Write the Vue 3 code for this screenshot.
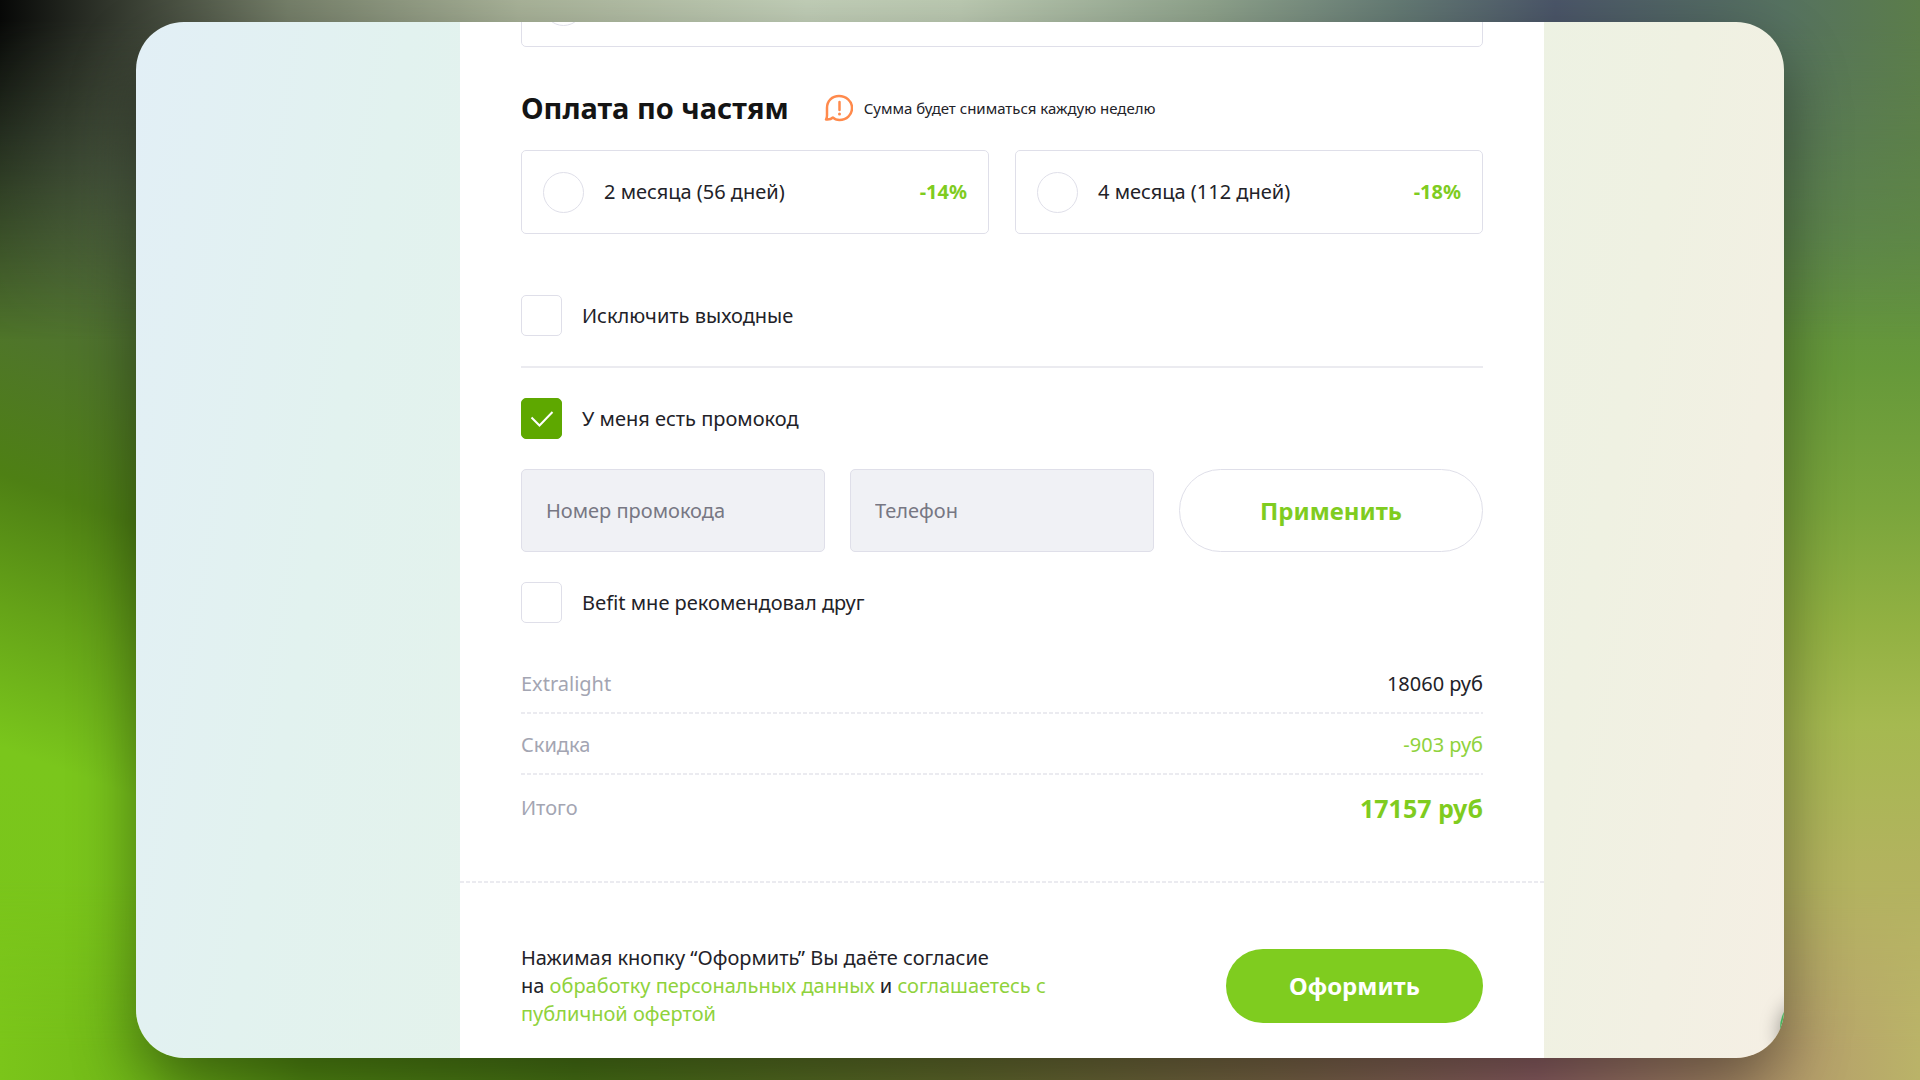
<template>
  <div class="page">
    <div class="window">
      <main class="checkout">
        <form @submit.prevent="submitOrder">
          <div class="order">
            <label class="option option-cut">
              <input v-model="plan" type="radio" name="plan" value="full" aria-label="Полная оплата" />
            </label>

            <div class="section-head">
              <h2>Оплата по частям</h2>
              <p class="note">
                <svg width="29" height="28" viewBox="0 0 29 28" fill="none" aria-hidden="true">
                  <path
                    d="M2 25.500c1.200-1.500 1-3.500 1-5V14C3 7 8 2 15 2s13 5 13 12-5.500 12-12.500 12c-2.800 0-5-.8-6.500-2.500C7.500 25 5 25.800 2 25.500z"
                    stroke="#ff8a4c" stroke-width="2.500" stroke-linejoin="round"
                  />
                  <path d="M15.500 8v8" stroke="#ff8a4c" stroke-width="2.500" stroke-linecap="round" />
                  <circle cx="15.500" cy="20" r="1.500" fill="#ff8a4c" />
                </svg>
                <span>Сумма будет сниматься каждую неделю</span>
              </p>
            </div>

            <div class="options">
              <label v-for="item in plans" :key="item.value" class="option">
                <input v-model="plan" type="radio" name="plan" :value="item.value" />
                <span>{{ item.title }}</span>
                <b>{{ item.discount }}</b>
              </label>
            </div>

            <label class="check weekends">
              <input v-model="form.skipWeekends" type="checkbox" />
              <span>Исключить выходные</span>
            </label>

            <hr />

            <label class="check">
              <input v-model="form.hasPromo" type="checkbox" />
              <span>У меня есть промокод</span>
            </label>

            <div v-if="form.hasPromo" class="promo">
              <input v-model="form.promo" type="text" placeholder="Номер промокода" aria-label="Номер промокода" />
              <input v-model="form.phone" type="tel" placeholder="Телефон" aria-label="Телефон" />
              <button type="button" class="apply">Применить</button>
            </div>

            <label class="check">
              <input v-model="form.fromFriend" type="checkbox" />
              <span>Befit мне рекомендовал друг</span>
            </label>

            <dl class="totals">
              <div class="dashed">
                <dt>Extralight</dt>
                <dd>18060 руб</dd>
              </div>
              <div class="dashed">
                <dt>Скидка</dt>
                <dd class="discount">-903 руб</dd>
              </div>
              <div>
                <dt>Итого</dt>
                <dd class="sum">17157 руб</dd>
              </div>
            </dl>
          </div>

          <div class="confirm">
            <p>
              Нажимая кнопку “Оформить” Вы даёте согласие<br />
              на <a href="#">обработку персональных данных</a> и <a href="#">соглашаетесь с<br />
              публичной офертой</a>
            </p>
            <button type="submit" class="submit">Оформить</button>
          </div>
        </form>
      </main>
      <span class="chat"></span>
    </div>
  </div>
</template>

<script setup>
import { reactive, ref } from 'vue'

const plan = ref('')
const plans = [
  { value: '2', title: '2 месяца (56 дней)', discount: '-14%' },
  { value: '4', title: '4 месяца (112 дней)', discount: '-18%' }
]

const form = reactive({
  skipWeekends: false,
  hasPromo: true,
  fromFriend: false,
  promo: '',
  phone: ''
})
const submitted = ref(false)

function submitOrder() {
  submitted.value = true
}
</script>

<style>
body {
  margin: 0;
}
</style>

<style scoped>
* {
  box-sizing: border-box;
}
.page {
  position: relative;
  display: flex;
  height: 100vh;
  padding: 22px 136px;
  overflow: hidden;
  font-family: "Noto Sans", "Open Sans", sans-serif;
  font-size: 20px;
  line-height: 28px;
  color: #222228;
  background:
    linear-gradient(to bottom, #5b7d4d 0%, #5f8c44 22%, #66993a 34%, #7aa53c 47%, #92b142 58%, #a5b950 67%, #b2b35e 80%, #bab368 100%) right / 50% 100% no-repeat,
    linear-gradient(200deg, #5e6c50 0%, #58704a 20%, #4f742c 36%, #4e8014 49%, #65a318 60%, #7ac61c 72%, #7bc51a 100%) left / 300px 100% no-repeat,
    #7bc51a;
}
.page::before,
.page::after {
  content: "";
  position: absolute;
  left: 0;
  right: 0;
}
/* colour glow along the top and bottom edges */
.page::before {
  top: 0;
  height: 340px;
  background: linear-gradient(to right, #070807 0%, #3a4034 7%, #76806a 15%, #a9b399 27%, #c2cfb8 42%, #bccab2 50%, #8fa38c 63%, #647a74 73%, #4b5669 81%, #567260 93%, #5b7d4a 100%);
  mask-image: linear-gradient(to bottom, #000 20px, transparent);
}
.page::after {
  bottom: 0;
  height: 200px;
  background: linear-gradient(to right, #7bc51a 0%, #70b818 8%, #559012 16%, #4c7a16 30%, #66702e 50%, #7e6a48 66%, #946468 80%, #b4986c 92%, #bab368 100%);
  mask-image: linear-gradient(to top, #000 30px, transparent);
}
.window {
  position: relative;
  z-index: 1;
  flex: 1;
  padding: 0 240px 0 324px;
  border-radius: 48px;
  overflow: hidden;
  background: linear-gradient(100deg, #e2eff6 0%, #e2f2ef 15%, #e6f3e6 50%, #eff1e2 85%, #f5efe4 100%);
  box-shadow: 0 28px 64px rgba(0, 0, 0, 0.42);
}
.checkout {
  min-height: 100%;
  background: #fff;
}
.order {
  padding: 0 61px 41px;
}
.dashed,
.confirm {
  background: repeating-linear-gradient(to right, #ebebf0 0 4px, transparent 4px 6px) bottom / 100% 2px no-repeat;
}

/* options */
.option {
  display: flex;
  align-items: center;
  gap: 20px;
  height: 84px;
  padding: 0 21px;
  border: 1px solid #dfdfe9;
  border-radius: 5px;
}
.option b {
  margin-left: auto;
  color: #7fcc1f;
}
.option-cut {
  margin-top: -59px;
}
.options {
  display: grid;
  grid-template-columns: 1fr 1fr;
  gap: 26px;
}
input[type="radio"],
input[type="checkbox"] {
  flex: none;
  width: 41px;
  height: 41px;
  margin: 0;
  appearance: none;
  border: 1px solid #dfdfe9;
  border-radius: 5px;
  background: #fff;
}
input[type="radio"] {
  border-radius: 50%;
}
input[type="radio"]:checked {
  border: 12px solid #5ea800;
}
input[type="checkbox"]:checked {
  border-color: #5ea800;
  background: #5ea800 url("data:image/svg+xml,%3Csvg xmlns='http://www.w3.org/2000/svg' width='24' height='18' fill='none' stroke='white' stroke-width='2'%3E%3Cpath d='M1.500 7.500l8 8L22.500 2'/%3E%3C/svg%3E") center no-repeat;
}

.section-head {
  display: flex;
  align-items: center;
  gap: 35px;
  height: 103px;
  padding-top: 18px;
}
h2 {
  margin: 0;
  font-size: 29px;
  line-height: 40px;
  color: #141414;
}
.note {
  display: flex;
  align-items: center;
  gap: 11px;
  margin: 0;
  font-size: 15px;
}

.check {
  display: flex;
  align-items: center;
  gap: 20px;
}
.weekends {
  margin-top: 61px;
}
hr {
  height: 2px;
  margin: 30px 0;
  border: 0;
  background: #ebebf0;
}

/* promo code */
.promo {
  display: grid;
  grid-template-columns: repeat(3, 1fr);
  gap: 25px;
  margin: 30px 0;
}
.promo input,
.apply {
  width: 100%;
  height: 83px;
  padding: 0 24px;
  border: 1px solid #dfdfe9;
  border-radius: 5px;
  font: inherit;
}
.promo input {
  background: #f0f1f5;
}
.promo input::placeholder {
  color: #777783;
  opacity: 1;
}
.promo .apply {
  border-radius: 42px;
  background: #fff;
  color: #7fcc1f;
  font-size: 24px;
  font-weight: 700;
}

/* totals */
.totals {
  margin: 30px 0 0;
}
.totals div {
  display: flex;
  justify-content: space-between;
  align-items: center;
  height: 61px;
}
.totals div:last-child {
  height: 65px;
}
dt {
  color: #a3a5b2;
}
dd {
  margin: 0;
}
.discount,
a {
  color: #8fd23c;
}
.sum {
  color: #7fcc1f;
  font-size: 25px;
  font-weight: 700;
}

.confirm {
  display: flex;
  align-items: center;
  justify-content: space-between;
  padding: 63px 61px 60px;
  background-position: top;
}
.confirm p {
  margin: 0;
}
a {
  text-decoration: none;
}
.submit {
  width: 257px;
  height: 74px;
  border: 0;
  border-radius: 37px;
  background: #7fcc1f;
  color: #fff;
  font: inherit;
  font-size: 24px;
  font-weight: 700;
}

/* edge of the chat widget that peeks into the window */
.chat {
  position: absolute;
  right: -64px;
  bottom: -4px;
  width: 68px;
  height: 68px;
  border-radius: 50%;
  background: #46b45c;
  box-shadow: 0 4px 20px rgba(0, 0, 0, 0.4);
}
</style>
